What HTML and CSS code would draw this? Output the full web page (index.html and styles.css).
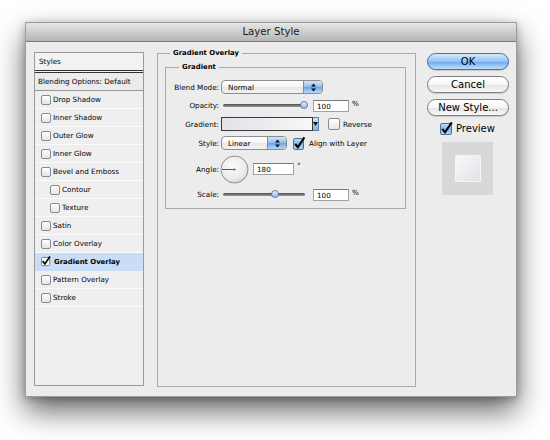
FILE: index.html
```html
<!DOCTYPE html>
<html lang="en">
<head>
    <meta charset="UTF-8">
    <title>Layer Style</title>
    <link rel="stylesheet" href="styles.css">
</head>
<body>
    <div class="window">
        <div class="titlebar">Layer Style</div>

        <div class="content">
            <!-- Styles list -->
            <div class="styles-list">
                <div class="list-head">Styles</div>
                <div class="list-row blending">Blending Options: Default</div>
                <div class="list-row"><span class="check"></span>Drop Shadow</div>
                <div class="list-row"><span class="check"></span>Inner Shadow</div>
                <div class="list-row"><span class="check"></span>Outer Glow</div>
                <div class="list-row"><span class="check"></span>Inner Glow</div>
                <div class="list-row"><span class="check"></span>Bevel and Emboss</div>
                <div class="list-row sub"><span class="check"></span>Contour</div>
                <div class="list-row sub"><span class="check"></span>Texture</div>
                <div class="list-row"><span class="check"></span>Satin</div>
                <div class="list-row"><span class="check"></span>Color Overlay</div>
                <div class="list-row selected">
                    <svg class="tick small" viewBox="0 0 12 12" width="11" height="11">
                        <rect x="0.5" y="1.5" width="9" height="9" rx="1.5" fill="#fff" stroke="#7a7a7a"/>
                        <path d="M1.8 5.6 L4.2 8.6 L9.8 0.6" fill="none" stroke="#000" stroke-width="1.8"/>
                    </svg>
                    <b>Gradient Overlay</b>
                </div>
                <div class="list-row"><span class="check"></span>Pattern Overlay</div>
                <div class="list-row"><span class="check"></span>Stroke</div>
            </div>

            <!-- Settings -->
            <fieldset class="group outer">
                <legend>Gradient Overlay</legend>
                <fieldset class="group inner">
                    <legend>Gradient</legend>
                    <div class="form">
                        <span class="label">Blend Mode:</span>
                        <div class="ctrl">
                            <span class="popup blend">Normal<span class="popup-arrows"><svg viewBox="0 0 7 9" width="7" height="9"><path d="M3.5 0.5 L6 3.5 L1 3.5 Z M3.5 8.5 L6 5.5 L1 5.5 Z" fill="#111"/></svg></span></span>
                        </div>

                        <span class="label">Opacity:</span>
                        <div class="ctrl">
                            <div class="slider">
                                <span class="track"></span>
                                <span class="thumb" style="left: 79px"></span>
                            </div>
                            <span class="field num">100</span>
                            <span class="unit">%</span>
                        </div>

                        <span class="label">Gradient:</span>
                        <div class="ctrl">
                            <span class="gradient-box"></span>
                            <span class="gradient-arrow"><svg viewBox="0 0 5 4" width="5" height="4"><path d="M0 0 H5 L2.5 4 Z" fill="#111"/></svg></span>
                            <span class="check mid reverse"></span>
                            <span class="opt">Reverse</span>
                        </div>

                        <span class="label">Style:</span>
                        <div class="ctrl">
                            <span class="popup style">Linear<span class="popup-arrows"><svg viewBox="0 0 7 9" width="7" height="9"><path d="M3.5 0.5 L6 3.5 L1 3.5 Z M3.5 8.5 L6 5.5 L1 5.5 Z" fill="#111"/></svg></span></span>
                            <svg class="tick align" viewBox="0 0 13 13" width="13" height="13">
                                <defs>
                                    <linearGradient id="blueBox" x1="0" y1="0" x2="0" y2="1">
                                        <stop offset="0" stop-color="#c9e0f8"/>
                                        <stop offset="0.5" stop-color="#7fb3ea"/>
                                        <stop offset="1" stop-color="#b8d7f7"/>
                                    </linearGradient>
                                </defs>
                                <rect x="0.5" y="1.5" width="10" height="11" rx="1.5" fill="url(#blueBox)" stroke="#4e6f98"/>
                                <path d="M2.2 6.8 L4.8 10.2 L11.4 0.4" fill="none" stroke="#000" stroke-width="2"/>
                            </svg>
                            <span class="opt">Align with Layer</span>
                        </div>

                        <span class="label">Angle:</span>
                        <div class="ctrl">
                            <svg class="dial" viewBox="0 0 29 29" width="29" height="29">
                                <defs>
                                    <radialGradient id="dialFill" cx="0.45" cy="0.4" r="0.65">
                                        <stop offset="0" stop-color="#fbfbfb"/>
                                        <stop offset="0.7" stop-color="#ebebeb"/>
                                        <stop offset="1" stop-color="#cfcfcf"/>
                                    </radialGradient>
                                </defs>
                                <circle cx="14.5" cy="14.5" r="13.5" fill="url(#dialFill)" stroke="#8f8f8f"/>
                                <line x1="2" y1="14.5" x2="14.5" y2="14.5" stroke="#555" stroke-width="1"/>
                                <circle cx="14.5" cy="14.5" r="1" fill="#555"/>
                            </svg>
                            <span class="field angle">180</span>
                            <span class="unit deg">°</span>
                        </div>

                        <span class="label">Scale:</span>
                        <div class="ctrl">
                            <div class="slider">
                                <span class="track wide"></span>
                                <span class="thumb" style="left: 50px"></span>
                            </div>
                            <span class="field num">100</span>
                            <span class="unit">%</span>
                        </div>
                    </div>
                </fieldset>
            </fieldset>

            <!-- Buttons and preview -->
            <div class="actions">
                <button class="btn default">OK</button>
                <button class="btn">Cancel</button>
                <button class="btn">New Style...</button>
                <div class="preview-toggle">
                    <svg class="tick" viewBox="0 0 13 13" width="13" height="13">
                        <rect x="0.5" y="1.5" width="11" height="11" rx="1.5" fill="url(#blueBox)" stroke="#4e6f98"/>
                        <path d="M2.4 7 L5 10.4 L11.8 0.4" fill="none" stroke="#000" stroke-width="2"/>
                    </svg>
                    <span>Preview</span>
                </div>
                <div class="preview-box">
                    <div class="preview-swatch"></div>
                </div>
            </div>
        </div>
    </div>
</body>
</html>
```

FILE: styles.css
```css
* {
    box-sizing: border-box;
}

html {
    height: 100%;
    background-color: #fff;
}

body {
    margin: 0;
    min-height: 100%;
    padding-top: 22px;
    overflow: hidden;
    font-family: 'DejaVu Sans', Verdana, sans-serif;
    font-size: 7.2px;
    color: #000;
}

.window {
    width: 492px;
    height: 375px;
    margin-left: 25px;
    display: flex;
    flex-direction: column;
    background-color: #ececec;
    border: 1px solid #9c9c9c;
    box-shadow: 0 14px 28px rgba(0, 0, 0, 0.6), 0 2px 8px rgba(0, 0, 0, 0.25);
}

.titlebar {
    flex: none;
    height: 19px;
    line-height: 18px;
    text-align: center;
    font-size: 10.2px;
    color: #1c1c1c;
    background: linear-gradient(#e6e6e6, #b5b5b5);
    border-bottom: 1px solid #7b7b7b;
}

.content {
    flex: 1;
    display: flex;
    padding: 10px 7px 10px 8px;
}

/* Styles list */

.styles-list {
    width: 110px;
    flex: none;
    background-color: #efefef;
    border: 1px solid #9a9a9a;
}

.list-head {
    height: 20px;
    line-height: 18px;
    padding-left: 4px;
    background-color: #f2f2f2;
    border-bottom: 3px double #333;
}

.list-row {
    height: 18px;
    display: flex;
    align-items: center;
    padding-left: 6px;
    border-bottom: 1px solid #fbfbfb;
}

.list-row.blending {
    padding-left: 3px;
    background-color: #ebebeb;
    border-bottom: 1px solid #9a9a9a;
}

.list-row.sub {
    padding-left: 15px;
}

.list-row.selected {
    background-color: #c9ddf6;
    border-bottom-color: #c9ddf6;
}

.list-row b {
    font-weight: bold;
    font-size: 6.9px;
}

.check {
    width: 10px;
    height: 10px;
    flex: none;
    margin-right: 2px;
    border: 1px solid #8a8a8a;
    border-radius: 2px;
    background: linear-gradient(#fff, #e6e6e6);
}

.tick {
    flex: none;
    overflow: visible;
}

.tick.small {
    margin-right: 2px;
    margin-top: -1px;
}

/* Group boxes */

.group {
    margin: 0;
    min-width: 0;
    border: 1px solid #ababab;
}

.group legend {
    padding: 0 3px;
    font-weight: bold;
    font-size: 6.9px;
    line-height: 10px;
}

.outer {
    width: 259px;
    flex: none;
    margin: -4px 0 -1px 13px;
    padding: 4px 9px 0 7px;
}

.outer > legend {
    margin-left: 5px;
}

.inner {
    padding: 8px 0 7px 0;
}

.inner > legend {
    margin-left: 13px;
}

.form {
    display: grid;
    grid-template-columns: 53px auto;
    grid-template-rows: 14px 13px 14px 14px 28px 13px;
    column-gap: 2px;
    row-gap: 5px;
    align-items: center;
}

.label {
    text-align: right;
}

.ctrl {
    display: flex;
    align-items: center;
}

.popup {
    height: 14px;
    display: flex;
    align-items: center;
    justify-content: space-between;
    padding-left: 6px;
    border: 1px solid #8d8d8d;
    border-radius: 4px;
    background: linear-gradient(#fff, #f4f4f4 50%, #e6e6e6 51%, #f2f2f2);
    overflow: hidden;
}

.popup.blend {
    width: 102px;
}

.popup.style {
    width: 66px;
}

.popup-arrows {
    width: 19px;
    height: 100%;
    display: flex;
    align-items: center;
    justify-content: center;
    border-left: 1px solid #6f8fb8;
    background: linear-gradient(#d3e6fa, #8dbcef 50%, #68a3e6 51%, #b9daf9);
}

.slider {
    position: relative;
    width: 88px;
    height: 13px;
    flex: none;
}

.track {
    position: absolute;
    left: 2px;
    top: 5px;
    width: 80px;
    height: 3px;
    border-radius: 2px;
    background: linear-gradient(#4e4e4e, #9a9a9a);
}

.track.wide {
    width: 82px;
}

.thumb {
    position: absolute;
    top: 2px;
    width: 8px;
    height: 8px;
    border: 1px solid #5f7ea6;
    border-radius: 4px;
    background: linear-gradient(#e2efff, #8ebcf0);
}

.field {
    height: 12px;
    line-height: 11px;
    padding-left: 3px;
    background-color: #fff;
    border: 1px solid #a2a2a2;
    border-top-color: #7a7a7a;
}

.field.num {
    width: 36px;
    margin-left: 4px;
}

.field.angle {
    width: 41px;
    margin-left: 4px;
}

.unit {
    margin-left: 3px;
    align-self: flex-start;
}

.unit.deg {
    margin-top: 6px;
}

.gradient-box {
    width: 92px;
    height: 14px;
    border: 1px solid #3a3a3a;
    background: linear-gradient(90deg, #e2e2e8, #f7f7f9);
}

.gradient-arrow {
    width: 6px;
    height: 14px;
    display: flex;
    align-items: center;
    justify-content: center;
    border: 1px solid #5d7da6;
    border-left: none;
    background: linear-gradient(#cfe3f9, #7eb1ea);
}

.check.mid {
    width: 12px;
    height: 12px;
    margin-left: 9px;
    margin-right: 3px;
}

.tick.align {
    margin-left: 6px;
    margin-right: 3px;
}

.dial {
    margin-left: -1px;
}

/* Buttons and preview */

.actions {
    width: 82px;
    flex: none;
    margin-left: 11px;
    padding-top: 1px;
    display: flex;
    flex-direction: column;
}

.btn {
    height: 17px;
    margin: 0 0 6px 0;
    padding: 0;
    font-family: 'DejaVu Sans', Verdana, sans-serif;
    font-size: 10px;
    line-height: 15px;
    color: #000;
    border: 1px solid #7f7f7f;
    border-radius: 9px;
    background: linear-gradient(#fff, #f6f6f6 50%, #e4e4e4 51%, #f8f8f8);
    box-shadow: 0 1px 1px rgba(0, 0, 0, 0.15);
}

.btn.default {
    border-color: #4a6f9e;
    background: linear-gradient(#d6e9fc, #93c2f2 50%, #6aa8ec 51%, #bfe0fc);
}

.preview-toggle {
    height: 12px;
    display: flex;
    align-items: center;
    padding-left: 13px;
    font-size: 10px;
}

.preview-toggle span {
    margin-left: 3px;
}

.preview-box {
    width: 51px;
    height: 53px;
    margin: 8px 0 0 15px;
    display: flex;
    align-items: center;
    justify-content: center;
    background-color: #d8d8d8;
}

.preview-swatch {
    width: 26px;
    height: 27px;
    border: 1px solid #f4f4f6;
    background: linear-gradient(135deg, #f9f9fb, #e3e3e8);
}
```
